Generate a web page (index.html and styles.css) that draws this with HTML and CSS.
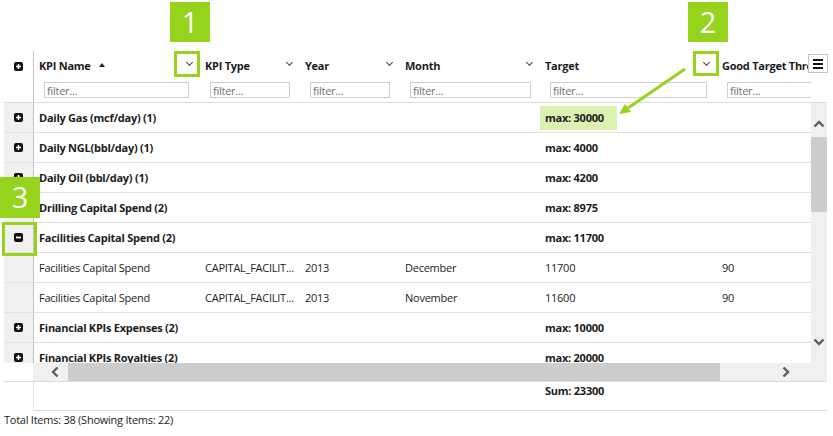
FILE: index.html
```html
<!DOCTYPE html>
<html lang="en">
<head>
    <meta charset="UTF-8">
    <title>KPI Grid</title>
    <link rel="stylesheet" href="styles.css">
</head>
<body>
<div class="page">
    <div class="grid">
        <div class="grid-head">
            <div class="expand-cell head-expand">
                <svg class="toggle" width="9" height="9" viewBox="0 0 9 9"><rect width="9" height="9" rx="2" fill="#111"/><path d="M4.5 2v5M2 4.5h5" stroke="#fff" stroke-width="1.6"/></svg>
            </div>
            <div class="head-cols">
                <div class="hcol w-name">
                    <div class="htitle"><span>KPI Name</span><span class="sort"></span><span class="chev"></span></div>
                    <input class="filter" placeholder="filter...">
                </div>
                <div class="hcol w-type">
                    <div class="htitle"><span>KPI Type</span><span class="chev"></span></div>
                    <input class="filter" placeholder="filter...">
                </div>
                <div class="hcol w-year">
                    <div class="htitle"><span>Year</span><span class="chev"></span></div>
                    <input class="filter" placeholder="filter...">
                </div>
                <div class="hcol w-month">
                    <div class="htitle"><span>Month</span><span class="chev"></span></div>
                    <input class="filter" placeholder="filter...">
                </div>
                <div class="hcol w-target">
                    <div class="htitle"><span>Target</span><span class="chev"></span></div>
                    <input class="filter" placeholder="filter...">
                </div>
                <div class="hcol w-good">
                    <div class="htitle"><span>Good Target Threshold</span></div>
                    <input class="filter" placeholder="filter...">
                </div>
            </div>
            <button class="col-menu"><span></span><span></span><span></span></button>
        </div>

        <div class="grid-body">
            <div class="rows">
                <div class="row group">
                    <div class="expand-cell"><svg class="toggle" width="9" height="9" viewBox="0 0 9 9"><rect width="9" height="9" rx="2" fill="#111"/><path d="M4.5 2v5M2 4.5h5" stroke="#fff" stroke-width="1.6"/></svg></div>
                    <div class="c w-name">Daily Gas (mcf/day) (1)</div>
                    <div class="c w-type"></div><div class="c w-year"></div><div class="c w-month"></div>
                    <div class="c w-target agg-cell"><span class="agg highlight">max: 30000</span></div>
                    <div class="c w-good"></div>
                </div>
                <div class="row group">
                    <div class="expand-cell"><svg class="toggle" width="9" height="9" viewBox="0 0 9 9"><rect width="9" height="9" rx="2" fill="#111"/><path d="M4.5 2v5M2 4.5h5" stroke="#fff" stroke-width="1.6"/></svg></div>
                    <div class="c w-name">Daily NGL(bbl/day) (1)</div>
                    <div class="c w-type"></div><div class="c w-year"></div><div class="c w-month"></div>
                    <div class="c w-target agg-cell"><span class="agg">max: 4000</span></div>
                    <div class="c w-good"></div>
                </div>
                <div class="row group">
                    <div class="expand-cell"><svg class="toggle" width="9" height="9" viewBox="0 0 9 9"><rect width="9" height="9" rx="2" fill="#111"/><path d="M4.5 2v5M2 4.5h5" stroke="#fff" stroke-width="1.6"/></svg></div>
                    <div class="c w-name">Daily Oil (bbl/day) (1)</div>
                    <div class="c w-type"></div><div class="c w-year"></div><div class="c w-month"></div>
                    <div class="c w-target agg-cell"><span class="agg">max: 4200</span></div>
                    <div class="c w-good"></div>
                </div>
                <div class="row group">
                    <div class="expand-cell"><svg class="toggle" width="9" height="9" viewBox="0 0 9 9"><rect width="9" height="9" rx="2" fill="#111"/><path d="M4.5 2v5M2 4.5h5" stroke="#fff" stroke-width="1.6"/></svg></div>
                    <div class="c w-name">Drilling Capital Spend (2)</div>
                    <div class="c w-type"></div><div class="c w-year"></div><div class="c w-month"></div>
                    <div class="c w-target agg-cell"><span class="agg">max: 8975</span></div>
                    <div class="c w-good"></div>
                </div>
                <div class="row group">
                    <div class="expand-cell"><svg class="toggle" width="9" height="9" viewBox="0 0 9 9"><rect width="9" height="9" rx="2" fill="#111"/><path d="M2 4.5h5" stroke="#fff" stroke-width="1.8"/></svg></div>
                    <div class="c w-name">Facilities Capital Spend (2)</div>
                    <div class="c w-type"></div><div class="c w-year"></div><div class="c w-month"></div>
                    <div class="c w-target agg-cell"><span class="agg">max: 11700</span></div>
                    <div class="c w-good"></div>
                </div>
                <div class="row">
                    <div class="expand-cell"></div>
                    <div class="c w-name">Facilities Capital Spend</div>
                    <div class="c w-type">CAPITAL_FACILIT...</div>
                    <div class="c w-year">2013</div>
                    <div class="c w-month">December</div>
                    <div class="c w-target">11700</div>
                    <div class="c w-good">90</div>
                </div>
                <div class="row">
                    <div class="expand-cell"></div>
                    <div class="c w-name">Facilities Capital Spend</div>
                    <div class="c w-type">CAPITAL_FACILIT...</div>
                    <div class="c w-year">2013</div>
                    <div class="c w-month">November</div>
                    <div class="c w-target">11600</div>
                    <div class="c w-good">90</div>
                </div>
                <div class="row group">
                    <div class="expand-cell"><svg class="toggle" width="9" height="9" viewBox="0 0 9 9"><rect width="9" height="9" rx="2" fill="#111"/><path d="M4.5 2v5M2 4.5h5" stroke="#fff" stroke-width="1.6"/></svg></div>
                    <div class="c w-name">Financial KPIs Expenses (2)</div>
                    <div class="c w-type"></div><div class="c w-year"></div><div class="c w-month"></div>
                    <div class="c w-target agg-cell"><span class="agg">max: 10000</span></div>
                    <div class="c w-good"></div>
                </div>
                <div class="row group">
                    <div class="expand-cell"><svg class="toggle" width="9" height="9" viewBox="0 0 9 9"><rect width="9" height="9" rx="2" fill="#111"/><path d="M4.5 2v5M2 4.5h5" stroke="#fff" stroke-width="1.6"/></svg></div>
                    <div class="c w-name">Financial KPIs Royalties (2)</div>
                    <div class="c w-type"></div><div class="c w-year"></div><div class="c w-month"></div>
                    <div class="c w-target agg-cell"><span class="agg">max: 20000</span></div>
                    <div class="c w-good"></div>
                </div>
            </div>
            <div class="vscroll">
                <div class="vbtn up"><svg width="12" height="8" viewBox="0 0 12 8"><path d="M1.5 6.5L6 2l4.5 4.5" fill="none" stroke="#5e5e5e" stroke-width="2.4"/></svg></div>
                <div class="vthumb"></div>
                <div class="vbtn down"><svg width="12" height="8" viewBox="0 0 12 8"><path d="M1.5 1.5L6 6l4.5-4.5" fill="none" stroke="#5e5e5e" stroke-width="2.4"/></svg></div>
            </div>
        </div>

        <div class="hscroll-row">
            <div class="corner"></div>
            <div class="hscroll">
                <div class="hbtn left"><svg width="8" height="12" viewBox="0 0 8 12"><path d="M6.5 1.5L2 6l4.5 4.5" fill="none" stroke="#5e5e5e" stroke-width="2.4"/></svg></div>
                <div class="hthumb"></div>
                <div class="hbtn right"><svg width="8" height="12" viewBox="0 0 8 12"><path d="M1.5 1.5L6 6l-4.5 4.5" fill="none" stroke="#5e5e5e" stroke-width="2.4"/></svg></div>
            </div>
        </div>

        <div class="agg-row">
            <div class="agg-corner"></div>
            <div class="agg-main">
                <div class="f w-name"></div><div class="f w-type"></div><div class="f w-year"></div><div class="f w-month"></div>
                <div class="f w-target">Sum: 23300</div>
            </div>
        </div>
    </div>

    <div class="status">Total Items: 38 (Showing Items: 22)</div>

    <div class="badge b1">1</div>
    <div class="badge b2">2</div>
    <div class="badge b3">3</div>
    <div class="ring r1"></div>
    <div class="ring r2"></div>
    <div class="ring r3"></div>
    <svg class="arrow" width="833" height="436" viewBox="0 0 833 436">
        <line x1="685" y1="69" x2="628" y2="108" stroke="#96d31c" stroke-width="3"/>
        <polygon points="619,114 631,112 625,104" fill="#96d31c"/>
    </svg>
</div>
</body>
</html>
```

FILE: styles.css
```css
:root {
    --green: #96d31c;
    --line: #e2e2e2;
    --col-line: #c4c4c4;
    --track: #f0f0f0;
    --thumb: #cdcdcd;
    --text: #1c1c1c;
}

* {
    box-sizing: border-box;
}

body {
    margin: 0;
    font-family: "Open Sans", "Noto Sans", sans-serif;
    font-size: 11px;
    letter-spacing: -0.25px;
    color: var(--text);
    background: #fff;
}

.page {
    position: relative;
    width: 833px;
    height: 436px;
    padding: 51px 0 0 4px;
    overflow: hidden;
}

.grid {
    width: 823px;
}

/* header */
.grid-head {
    position: relative;
    display: flex;
    height: 52px;
    border-bottom: 1px solid #dadada;
}

.expand-cell {
    flex: none;
    width: 30px;
    border-right: 1px solid var(--col-line);
    display: flex;
    align-items: center;
    justify-content: center;
}

.head-expand {
    align-items: flex-start;
    padding-top: 11px;
    padding-right: 1px;
}

.head-cols {
    display: flex;
    width: 777px;
    overflow: hidden;
}

.hcol {
    flex: none;
    padding-left: 5px;
}

.htitle {
    display: flex;
    align-items: center;
    height: 28px;
    font-weight: bold;
    white-space: nowrap;
}

.sort {
    margin-left: 8px;
    width: 0;
    height: 0;
    border-left: 3px solid transparent;
    border-right: 3px solid transparent;
    border-bottom: 4px solid #222;
}

.chev {
    margin-left: auto;
    margin-right: 8px;
    margin-top: -5px;
    width: 5px;
    height: 5px;
    border-right: 1px solid #444;
    border-bottom: 1px solid #444;
    transform: rotate(45deg);
}

.filter {
    display: block;
    margin: 3px 0 0 5px;
    height: 16px;
    border: 1px solid #cfcfcf;
    padding: 0 2px;
    font-family: inherit;
    font-size: 11px;
    letter-spacing: -0.25px;
    color: #333;
    background: #fff;
    outline: none;
}

.filter::placeholder {
    color: #707070;
}

.w-name { width: 166px; }
.w-type { width: 100px; }
.w-year { width: 100px; }
.w-month { width: 140px; }
.w-target { width: 177px; }
.w-good { width: 150px; }

.w-name .filter { width: 145px; }
.w-type .filter { width: 80px; }
.w-year .filter { width: 80px; }
.w-month .filter { width: 121px; }
.w-target .filter { width: 157px; }
.w-good .filter { width: 130px; }

.col-menu {
    position: absolute;
    left: 804px;
    top: 3px;
    width: 20px;
    height: 19px;
    padding: 0;
    border: 1px solid #c6c6c6;
    background: #fff;
    display: flex;
    flex-direction: column;
    align-items: center;
    justify-content: center;
    gap: 2px;
}

.col-menu span {
    display: block;
    width: 10px;
    height: 2px;
    background: #111;
}

/* body */
.grid-body {
    display: flex;
    height: 260px;
}

.rows {
    width: 807px;
    overflow: hidden;
}

.row {
    display: flex;
    height: 30px;
    border-bottom: 1px solid var(--line);
}

.row .expand-cell {
    background: var(--track);
}

.c {
    flex: none;
    padding-left: 5px;
    line-height: 29px;
    white-space: nowrap;
    overflow: hidden;
}

.group .c {
    font-weight: bold;
    overflow: visible;
}

.agg-cell {
    padding-left: 0;
    display: flex;
    align-items: center;
}

.agg {
    display: inline-block;
    padding: 0 13px 0 5px;
    line-height: 24px;
}

.highlight {
    background: #dbf1b2;
}

.vscroll {
    width: 16px;
    background: var(--track);
    display: flex;
    flex-direction: column;
}

.vbtn {
    display: flex;
    justify-content: center;
}

.vbtn.up {
    height: 34px;
    align-items: center;
    padding-top: 8px;
}

.vthumb {
    height: 75px;
    background: var(--thumb);
}

.vbtn.down {
    margin-top: auto;
    height: 38px;
    align-items: center;
    padding-bottom: 5px;
}

/* horizontal scroll */
.hscroll-row {
    display: flex;
    height: 19px;
    border-bottom: 1px solid #dadada;
}

.corner {
    width: 29px;
}

.hscroll {
    flex: 1;
    display: flex;
    background: var(--track);
    height: 18px;
}

.hbtn {
    display: flex;
    align-items: center;
}

.hbtn.left {
    width: 35px;
    padding-left: 18px;
}

.hthumb {
    width: 652px;
    background: var(--thumb);
}

.hbtn.right {
    margin-left: 62px;
}

/* aggregates */
.agg-row {
    display: flex;
    height: 29px;
}

.agg-corner {
    width: 30px;
    border-right: 1px solid #e4e4e4;
}

.agg-main {
    flex: 1;
    display: flex;
    border-bottom: 1px solid #dadada;
}

.f {
    flex: none;
    padding: 1px 0 0 5px;
    font-weight: bold;
}

.status {
    line-height: 16px;
    padding-top: 1px;
}

/* callouts */
.badge {
    position: absolute;
    width: 40px;
    height: 40px;
    background: var(--green);
    color: #fff;
    font-size: 29px;
    letter-spacing: 0;
    line-height: 40px;
    text-align: center;
}

.b1 { left: 170px; top: 2px; }
.b2 { left: 688px; top: 2px; }
.b3 { left: 0; top: 177px; height: 41px; }

.ring {
    position: absolute;
    border: 3px solid var(--green);
}

.r1 { left: 174px; top: 51px; width: 26px; height: 26px; }
.r2 { left: 693px; top: 51px; width: 26px; height: 25px; }
.r3 { left: 2px; top: 222px; width: 35px; height: 34px; }

.arrow {
    position: absolute;
    left: 0;
    top: 0;
    pointer-events: none;
}
```
